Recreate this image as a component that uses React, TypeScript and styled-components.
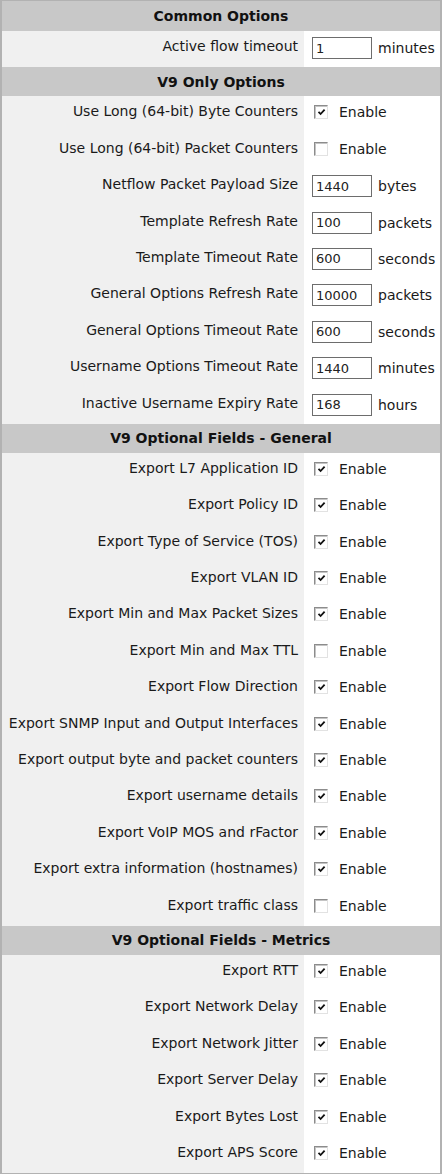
import React from "react";
import styled, { createGlobalStyle } from "styled-components";

const GlobalStyle = createGlobalStyle`
  html, body {
    margin: 0;
    padding: 0;
    background: #ffffff;
  }
  body {
    font-family: "DejaVu Sans", Verdana, sans-serif;
    font-size: 14px;
    color: #1a1a1a;
  }
`;

type Field =
  | { label: string; kind: "input"; value: string; unit: string }
  | { label: string; kind: "check"; checked: boolean };

type Section = { title: string; fields: Field[] };

const inp = (label: string, value: string, unit: string): Field => ({ label, kind: "input", value, unit });
const chk = (label: string, checked: boolean): Field => ({ label, kind: "check", checked });

const sections: Section[] = [
  {
    title: "Common Options",
    fields: [inp("Active flow timeout", "1", "minutes")],
  },
  {
    title: "V9 Only Options",
    fields: [
      chk("Use Long (64-bit) Byte Counters", true),
      chk("Use Long (64-bit) Packet Counters", false),
      inp("Netflow Packet Payload Size", "1440", "bytes"),
      inp("Template Refresh Rate", "100", "packets"),
      inp("Template Timeout Rate", "600", "seconds"),
      inp("General Options Refresh Rate", "10000", "packets"),
      inp("General Options Timeout Rate", "600", "seconds"),
      inp("Username Options Timeout Rate", "1440", "minutes"),
      inp("Inactive Username Expiry Rate", "168", "hours"),
    ],
  },
  {
    title: "V9 Optional Fields - General",
    fields: [
      chk("Export L7 Application ID", true),
      chk("Export Policy ID", true),
      chk("Export Type of Service (TOS)", true),
      chk("Export VLAN ID", true),
      chk("Export Min and Max Packet Sizes", true),
      chk("Export Min and Max TTL", false),
      chk("Export Flow Direction", true),
      chk("Export SNMP Input and Output Interfaces", true),
      chk("Export output byte and packet counters", true),
      chk("Export username details", true),
      chk("Export VoIP MOS and rFactor", true),
      chk("Export extra information (hostnames)", true),
      chk("Export traffic class", false),
    ],
  },
  {
    title: "V9 Optional Fields - Metrics",
    fields: [
      chk("Export RTT", true),
      chk("Export Network Delay", true),
      chk("Export Network Jitter", true),
      chk("Export Server Delay", true),
      chk("Export Bytes Lost", true),
      chk("Export APS Score", true),
    ],
  },
];

const Frame = styled.div`
  width: 442px;
  box-sizing: border-box;
  border-style: solid;
  border-color: #b2b2b2;
  border-width: 1px 2px 2px 2px;
  display: flex;
  flex-direction: column;
  background: #ffffff;
`;

const SectionHeader = styled.div<{ $first?: boolean }>`
  height: ${(p) => (p.$first ? "30px" : "29px")};
  background: #c8c8c8;
  display: flex;
  align-items: center;
  justify-content: center;
  font-weight: bold;
  font-size: 14px;
  color: #111111;
`;

const Row = styled.div`
  display: grid;
  grid-template-columns: 302px 1fr;
  height: 36.4px;
`;

const LabelCell = styled.div`
  background: #f0f0f0;
  text-align: right;
  padding: 6px 6px 0 0;
  line-height: 19px;
  white-space: nowrap;
  color: #1a1a1a;
`;

const ValueCell = styled.div`
  background: #ffffff;
  display: flex;
  align-items: flex-start;
  padding: 6px 0 0 8px;
  white-space: nowrap;
`;

const TextInput = styled.input`
  width: 60px;
  height: 22px;
  box-sizing: border-box;
  border: 1px solid #6d6d6d;
  padding: 0 3px;
  margin: 0;
  font-family: "DejaVu Sans", Verdana, sans-serif;
  font-size: 13px;
  color: #222222;
  background: #ffffff;
  outline: none;
`;

const Unit = styled.span`
  margin-left: 6px;
  line-height: 22px;
`;

const CheckBox = styled.span<{ $checked: boolean }>`
  width: 14px;
  height: 14px;
  box-sizing: border-box;
  margin: 3px 0 0 2px;
  border-style: solid;
  border-width: 1px;
  border-color: #8c8c8c #e2e2e2 #e2e2e2 #8c8c8c;
  box-shadow: inset 1px 1px 0 #c4c4c4;
  background: #ffffff;
  display: flex;
  align-items: center;
  justify-content: center;
  flex: none;
`;

const CheckLabel = styled.span`
  margin-left: 11px;
  line-height: 20px;
`;

function Check({ checked }: { checked: boolean }) {
  return (
    <CheckBox $checked={checked}>
      {checked && (
        <svg width="9" height="8" viewBox="0 0 9 8" aria-hidden="true">
          <path d="M1.5 3.8 L3.6 6 L7.6 1.6" fill="none" stroke="#111" strokeWidth="1.8" />
        </svg>
      )}
    </CheckBox>
  );
}

function FieldRow({ field }: { field: Field }) {
  return (
    <Row>
      <LabelCell>{field.label}</LabelCell>
      <ValueCell>
        {field.kind === "input" ? (
          <>
            <TextInput defaultValue={field.value} />
            <Unit>{field.unit}</Unit>
          </>
        ) : (
          <>
            <Check checked={field.checked} />
            <CheckLabel>Enable</CheckLabel>
          </>
        )}
      </ValueCell>
    </Row>
  );
}

export default function App() {
  return (
    <>
      <GlobalStyle />
      <Frame>
        {sections.map((s, i) => (
          <React.Fragment key={s.title}>
            <SectionHeader $first={i === 0}>{s.title}</SectionHeader>
            {s.fields.map((f) => (
              <FieldRow key={f.label} field={f} />
            ))}
          </React.Fragment>
        ))}
      </Frame>
    </>
  );
}
